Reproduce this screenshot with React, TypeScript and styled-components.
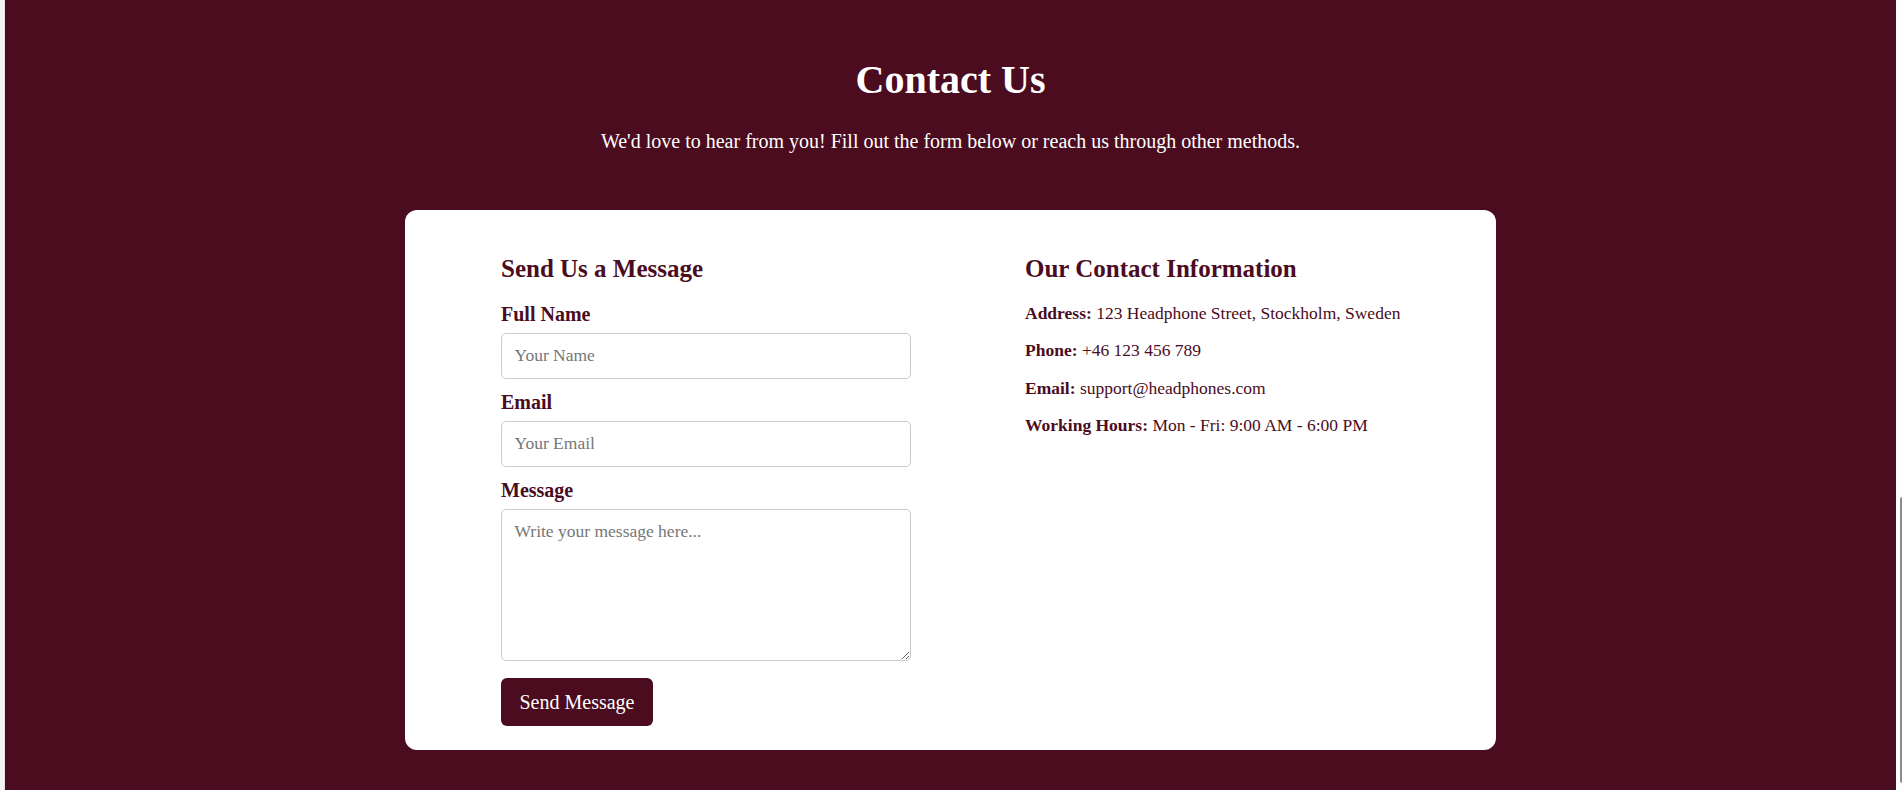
import React from 'react';
import styled, { createGlobalStyle } from 'styled-components';

const maroon = '#4a0c1e';

const GlobalStyle = createGlobalStyle`
  html, body {
    margin: 0;
    padding: 0;
    height: 100%;
    overflow: hidden;
  }
  body {
    font-family: 'Liberation Serif', 'Times New Roman', serif;
    background: #ffffff;
  }
`;

const Page = styled.div`
  display: flex;
  min-height: 790px;
`;

const LeftGutter = styled.div`
  width: 5px;
  background: #f3f3f3;
  border-right: 1px solid #e2e2e2;
  box-sizing: border-box;
`;

const Main = styled.main`
  flex: 1;
  background: ${maroon};
  padding-top: 56.5px;
  text-align: center;
`;

const ScrollTrack = styled.div`
  width: 6px;
  background: #fdfdfd;
  display: flex;
  flex-direction: column;
  padding: 497px 0 7px;
  box-sizing: border-box;
`;

const ScrollThumb = styled.div`
  flex: 1;
  margin-left: 3.5px;
  width: 2.5px;
  background: #8c8c8c;
  border-radius: 2px 0 0 2px;
`;

const Title = styled.h1`
  margin: 0;
  font-size: 40px;
  line-height: 46px;
  font-weight: 700;
  color: #ffffff;
`;

const Subtitle = styled.p`
  margin: 27px 0 0;
  font-size: 20px;
  line-height: 23px;
  color: #ffffff;
`;

const Card = styled.section`
  width: 1091px;
  margin: 57px auto 0;
  box-sizing: border-box;
  background: #ffffff;
  border-radius: 12px;
  padding: 44.5px 40px 24px 96px;
  display: flex;
  gap: 114px;
  text-align: left;
`;

const FormColumn = styled.div`
  width: 410px;
  flex-shrink: 0;
`;

const InfoColumn = styled.div`
  flex: 1;
`;

const SectionHeading = styled.h2`
  margin: 0 0 19.5px;
  font-size: 25px;
  line-height: 29px;
  font-weight: 700;
  color: ${maroon};
`;

const Form = styled.form`
  display: flex;
  flex-direction: column;
`;

const Label = styled.label`
  display: block;
  margin-bottom: 7px;
  font-size: 20px;
  line-height: 23px;
  font-weight: 700;
  color: ${maroon};
`;

const fieldStyle = `
  display: block;
  width: 100%;
  box-sizing: border-box;
  border: 1px solid #cccccc;
  border-radius: 5px;
  padding: 12.5px;
  font-family: 'Liberation Serif', 'Times New Roman', serif;
  font-size: 17.5px;
  line-height: 19px;
  color: #222;
  background: #ffffff;
  &::placeholder {
    color: #767676;
  }
`;

const Input = styled.input`
  ${fieldStyle}
  height: 46px;
  margin-bottom: 12px;
`;

const TextArea = styled.textarea`
  ${fieldStyle}
  height: 152px;
  margin-bottom: 17.5px;
  resize: vertical;
`;

const SubmitButton = styled.button`
  align-self: flex-start;
  background: ${maroon};
  color: #ffffff;
  border: none;
  border-radius: 6px;
  padding: 12.5px 18.5px;
  font-family: 'Liberation Serif', 'Times New Roman', serif;
  font-size: 20px;
  line-height: 23px;
  cursor: pointer;
`;

const InfoLine = styled.p`
  margin: 0 0 17.5px;
  font-size: 17.5px;
  line-height: 20px;
  color: ${maroon};
  white-space: nowrap;

  strong {
    font-weight: 700;
  }
`;

const info = [
  { label: 'Address:', value: '123 Headphone Street, Stockholm, Sweden' },
  { label: 'Phone:', value: '+46 123 456 789' },
  { label: 'Email:', value: 'support@headphones.com' },
  { label: 'Working Hours:', value: 'Mon - Fri: 9:00 AM - 6:00 PM' },
];

export default function App() {
  return (
    <>
      <GlobalStyle />
      <Page>
        <LeftGutter />
        <Main>
          <Title>Contact Us</Title>
          <Subtitle>We'd love to hear from you! Fill out the form below or reach us through other methods.</Subtitle>
          <Card>
            <FormColumn>
              <SectionHeading>Send Us a Message</SectionHeading>
              <Form onSubmit={(e) => e.preventDefault()}>
                <Label htmlFor="name">Full Name</Label>
                <Input id="name" type="text" placeholder="Your Name" />
                <Label htmlFor="email">Email</Label>
                <Input id="email" type="email" placeholder="Your Email" />
                <Label htmlFor="message">Message</Label>
                <TextArea id="message" placeholder="Write your message here..." />
                <SubmitButton type="submit">Send Message</SubmitButton>
              </Form>
            </FormColumn>
            <InfoColumn>
              <SectionHeading>Our Contact Information</SectionHeading>
              {info.map((item) => (
                <InfoLine key={item.label}>
                  <strong>{item.label}</strong> {item.value}
                </InfoLine>
              ))}
            </InfoColumn>
          </Card>
        </Main>
        <ScrollTrack>
          <ScrollThumb />
        </ScrollTrack>
      </Page>
    </>
  );
}
